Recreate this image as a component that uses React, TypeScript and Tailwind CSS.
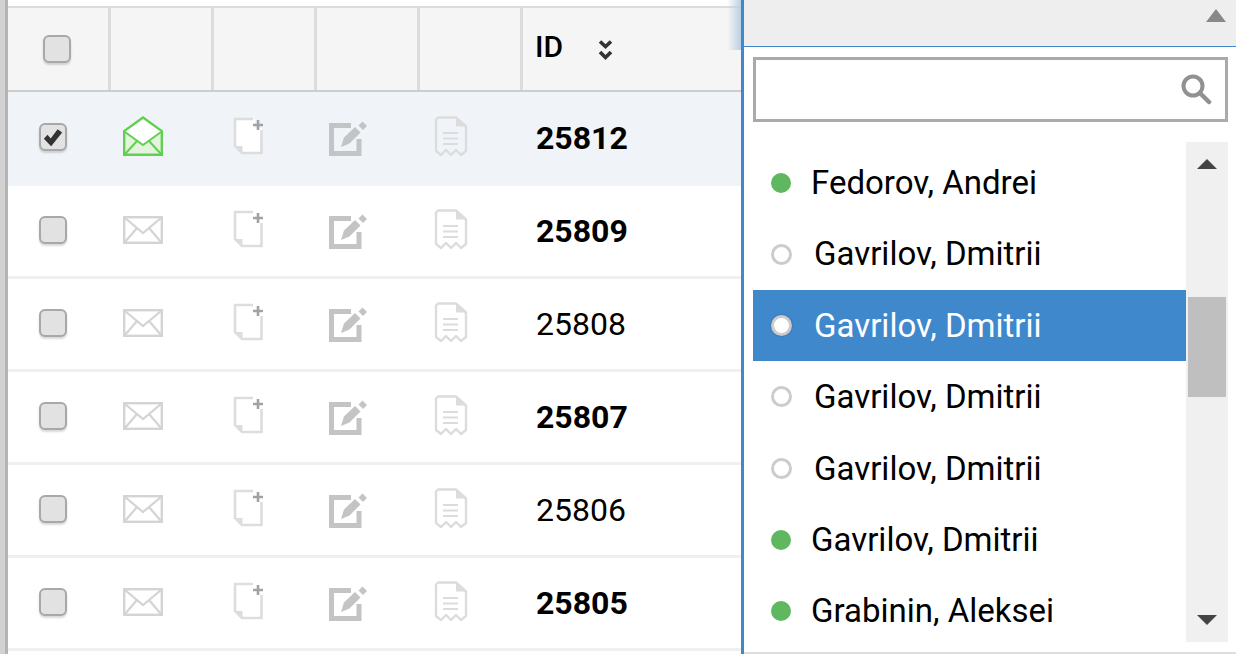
import React from "react";

const rows = [
  { id: "25812", bold: true, selected: true },
  { id: "25809", bold: true },
  { id: "25808", bold: false },
  { id: "25807", bold: true },
  { id: "25806", bold: false },
  { id: "25805", bold: true },
];

const people = [
  { name: "Fedorov, Andrei", online: true },
  { name: "Gavrilov, Dmitrii", online: false },
  { name: "Gavrilov, Dmitrii", online: false, active: true },
  { name: "Gavrilov, Dmitrii", online: false },
  { name: "Gavrilov, Dmitrii", online: false },
  { name: "Gavrilov, Dmitrii", online: true },
  { name: "Grabinin, Aleksei", online: true },
];

const Checkbox = ({ checked = false }: { checked?: boolean }) => (
  <div className="relative w-[28px] h-[28px] rounded-[6px] border-[2px] border-[#a8a8a8] bg-[#e2e2e2] shadow-[0_2px_2px_rgba(0,0,0,0.15)]">
    {checked && (
      <svg viewBox="0 0 24 24" className="absolute left-[1px] top-[1px] w-[22px] h-[22px]">
        <path d="M2 14 L6 9.5 L9.5 13.5 L17 3.5 L22 7 L10 22 Z" fill="#333" />
      </svg>
    )}
  </div>
);

const ClosedMail = () => (
  <svg viewBox="0 0 40 48" className="w-[40px] h-[48px]" fill="none">
    <rect x="1.2" y="10.2" width="37.6" height="25.6" fill="#fff" stroke="#d4d4d4" strokeWidth="2.4" />
    <path d="M2 11 L20 26 L38 11" stroke="#d4d4d4" strokeWidth="2.2" />
    <path d="M2 35 L14 21 M38 35 L26 21" stroke="#d4d4d4" strokeWidth="2.2" />
  </svg>
);

const OpenMail = () => (
  <svg viewBox="0 0 40 48" className="w-[40px] h-[48px]" fill="none">
    <path d="M20 3.5 L38.8 17 V41 H1.2 V17 Z" fill="#fff" />
    <path d="M1.2 18 L20 31 L38.8 18 V41 H1.2 Z" fill="#e2f5dc" />
    <path d="M20 3.5 L38.8 17 V40.8 H1.2 V17 Z" stroke="#62cf52" strokeWidth="2.4" />
    <path d="M2 18 L20 31 L38 18 M2 40 L14 27 M38 40 L26 27" stroke="#62cf52" strokeWidth="2" />
  </svg>
);

const NewNote = () => (
  <svg viewBox="0 0 32 48" className="w-[32px] h-[48px]" fill="none">
    <path d="M2 5 H22 V14 H28.5 V39 H9 L2 32 Z" fill="#fff" />
    <path d="M20 5 H2 V32 L9 39 H28.5 V16" stroke="#dddddd" strokeWidth="2.6" />
    <path d="M2 32 H9.5 V39 Z" fill="#dddddd" />
    <path d="M25 6 V16 M20 11 H30" stroke="#a2a2a2" strokeWidth="2.6" />
  </svg>
);

const EditNote = () => (
  <svg viewBox="0 0 38 48" className="w-[38px] h-[48px]" fill="none">
    <path d="M22 11.5 H2.5 V39.5 H30 V25" stroke="#c2c4c6" strokeWidth="5" />
    <path d="M12 33 L15 23.5 L26 13 L31.5 18.5 L20.5 29.5 Z" fill="#c2c4c6" />
    <path d="M33.5 7.5 L38 12 L34 16 L29.5 11.5 Z" fill="#c2c4c6" />
  </svg>
);

const Receipt = () => (
  <svg viewBox="0 0 34 48" className="w-[34px] h-[48px]" fill="none">
    <path d="M4 3.5 H22 L32 12.5 V37 L27 41 L22 36 L17 41 L12 36 L7 41 L2 37 V5.5 Z" stroke="#dcdcdc" strokeWidth="2.4" strokeLinejoin="round" />
    <path d="M22 4 V12.5 H32" fill="#dcdcdc" />
    <path d="M9 19 H24 M9 24.5 H24 M9 30 H24" stroke="#dcdcdc" strokeWidth="2.2" />
  </svg>
);

const headerCell = "h-full w-[103px] shrink-0 border-r-[3px] border-[#dcdcdc]";

const App = () => {
  return (
    <div className="relative w-[1236px] h-[654px] overflow-hidden flex bg-white text-black font-['Roboto',sans-serif]">
      {/* table on the left */}
      <div className="w-[741px] shrink-0 border-l-[5px] border-[#d2d2d2]">
        <div className="h-full border-l-[3px] border-[#b4b4b4] pt-[6px]">
          <div className="h-[86px] flex border-t-[2.5px] border-b-[2.5px] border-t-[#dcdcdc] border-b-[#cdcdcd] bg-[#f5f5f5]">
            <div className={`${headerCell} w-[102px] pl-[35px] flex items-center`}>
              <Checkbox />
            </div>
            <div className={headerCell} />
            <div className={headerCell} />
            <div className={headerCell} />
            <div className={headerCell} />
            <div className="h-full flex items-center pl-[12px] gap-[35px] font-medium text-[30px] pb-[5px]">
              <span>ID</span>
              <svg viewBox="0 0 15 22" className="w-[15px] h-[22px] mt-[6px]" fill="none">
                <path d="M2 2.5 L7.5 7.5 L13 2.5 M2 13 L7.5 18.5 L13 13" stroke="#333" strokeWidth="3.6" />
              </svg>
            </div>
          </div>
          {rows.map((row) => (
            <div
              key={row.id}
              className={
                row.selected
                  ? "h-[94px] pb-[2px] flex items-center bg-[#f0f4f9]"
                  : "h-[93px] flex items-center border-b-[3px] border-[#f0f0f0]"
              }
            >
              <div className="w-[102px] shrink-0 pl-[31px] pb-[2px]">
                <Checkbox checked={row.selected} />
              </div>
              <div className="w-[103px] shrink-0 pl-[13px]">
                {row.selected ? <OpenMail /> : <ClosedMail />}
              </div>
              <div className="w-[103px] shrink-0 pl-[20px]">
                <NewNote />
              </div>
              <div className="w-[103px] shrink-0 pl-[13px]">
                <EditNote />
              </div>
              <div className="w-[103px] shrink-0 pl-[15px]">
                <Receipt />
              </div>
              <div className={`pl-[14px] text-[32px] ${row.bold ? "font-bold" : "font-normal"}`}>{row.id}</div>
            </div>
          ))}
        </div>
      </div>

      {/* assignee dropdown */}
      <div className="relative flex-1 flex flex-col border-l-[3px] border-[#3f88cc]">
        <div className="absolute right-full top-0 mr-[3px] w-[14px] h-[50px] bg-gradient-to-l from-[#bcd0e4] to-transparent" />
        <div className="h-[47px] shrink-0 flex justify-end items-start pt-[9px] pr-[10px] bg-[#eeeeee] border-b border-[#3f88cc]">
          <div className="w-0 h-0 border-x-[10px] border-x-transparent border-b-[13px] border-b-[#888888]" />
        </div>
        <div className="ml-[9px] mr-[8px] mt-[10px] h-[65px] shrink-0 flex items-center justify-end pr-[13px] border-[3px] border-[#aaaaaa]">
          <svg viewBox="0 0 32 32" className="w-[32px] h-[32px]" fill="none">
            <circle cx="13" cy="12" r="9.5" stroke="#919191" strokeWidth="4" />
            <path d="M20 19 L29 28" stroke="#919191" strokeWidth="4.5" strokeLinecap="round" />
          </svg>
        </div>
        <div className="ml-[9px] mr-[8px] mt-[20px] h-[500px] shrink-0 flex overflow-hidden">
          <div className="flex-1 pt-[5px]">
            {people.map((person, i) => (
              <div
                key={i}
                className={`h-[71.4px] flex items-center pl-[18px] text-[33px] ${
                  person.active ? "bg-[#3f88cc] text-white" : ""
                }`}
              >
                {person.online ? (
                  <div className="w-[20px] h-[20px] rounded-full bg-[#5fb760] mr-[20px]" />
                ) : (
                  <div
                    className={`w-[21px] h-[21px] rounded-full border-[3px] border-[#cccccc] bg-white mr-[22px] ${
                      person.active ? "shadow-[0_0_2px_rgba(0,0,0,0.3)]" : ""
                    }`}
                  />
                )}
                <span>{person.name}</span>
              </div>
            ))}
          </div>
          <div className="w-[42px] shrink-0 flex flex-col items-center bg-[#f0f0f0]">
            <div className="mt-[17px] w-0 h-0 border-x-[10px] border-x-transparent border-b-[10px] border-b-[#444444]" />
            <div className="mt-[128px] w-[38px] h-[100px] bg-[#bfbfbf]" />
            <div className="mt-[218px] w-0 h-0 border-x-[10px] border-x-transparent border-t-[10px] border-t-[#444444]" />
          </div>
        </div>
        <div className="mt-[10px] h-[2px] shrink-0 bg-[#dddddd]" />
      </div>
    </div>
  );
};

export default App;
